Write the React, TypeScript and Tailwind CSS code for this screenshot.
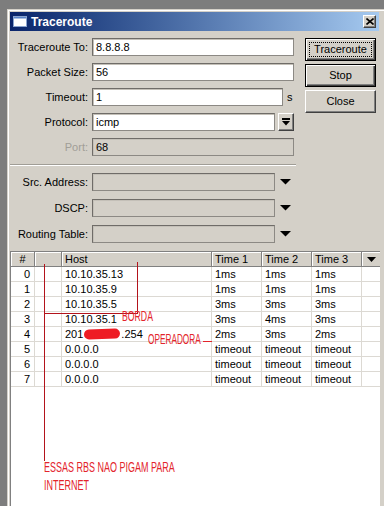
import React from "react";

const rows = [
  { n: "0", host: "10.10.35.13", t: ["1ms", "1ms", "1ms"] },
  { n: "1", host: "10.10.35.9", t: ["1ms", "1ms", "1ms"] },
  { n: "2", host: "10.10.35.5", t: ["3ms", "3ms", "3ms"] },
  { n: "3", host: "10.10.35.1", t: ["3ms", "4ms", "3ms"] },
  { n: "4", host: "hidden", t: ["2ms", "3ms", "2ms"] },
  { n: "5", host: "0.0.0.0", t: ["timeout", "timeout", "timeout"] },
  { n: "6", host: "0.0.0.0", t: ["timeout", "timeout", "timeout"] },
  { n: "7", host: "0.0.0.0", t: ["timeout", "timeout", "timeout"] },
];

const field =
  "h-[18px] border border-[#8c8984] border-t-[#6f6c68] border-l-[#6f6c68] shadow-[inset_1px_1px_0_#c4c0b8]";

const FormRow = ({
  label,
  muted = false,
  children,
}: {
  label: string;
  muted?: boolean;
  children: React.ReactNode;
}) => (
  <div className="flex h-[18px] items-center">
    <span
      className={`w-[78px] shrink-0 whitespace-nowrap text-right ${muted ? "text-[#a19e97]" : ""}`}
    >
      {label}
    </span>
    <div className="ml-[4px] flex flex-1 items-center">{children}</div>
  </div>
);

const DownArrow = () => (
  <svg width="11" height="6" viewBox="0 0 11 6" className="ml-[5px]">
    <polygon points="0,0 11,0 5.5,5.5" fill="#000" />
  </svg>
);

const Note = ({
  className,
  children,
}: {
  className: string;
  children: React.ReactNode;
}) => (
  <div
    className={`pointer-events-none absolute origin-top-left whitespace-nowrap font-['Liberation_Sans',sans-serif] text-[15px] leading-none text-[#e3242b] ${className}`}
  >
    {children}
  </div>
);

export default function App() {
  return (
    <div className="relative h-[506px] w-[384px] overflow-hidden bg-[#7d7d7d] pl-[7px] pt-[9px] font-['Liberation_Sans',Arial,sans-serif] text-[11px] leading-none text-black">
      <div className="flex h-[500px] w-[378px] flex-col border-l border-t border-[#d4d0c8] bg-[#d4d0c8] pl-[2px] pr-[5px] pt-[2px] shadow-[inset_1px_1px_0_#ffffff]">
        {/* title bar */}
        <div className="mr-[1px] flex h-[19px] shrink-0 items-center bg-gradient-to-r from-[#0a246a] to-[#a6caf0] pl-[3px] pr-[3px]">
          <svg width="14" height="11" viewBox="0 0 14 11">
            <rect x="0.5" y="0.5" width="13" height="10" fill="#fff" stroke="#8aa4d0" />
            <rect x="1" y="1" width="12" height="1.5" fill="#5b84c8" />
          </svg>
          <span className="ml-[4px] text-[12px] font-bold text-white">Traceroute</span>
          <div className="ml-auto flex h-[13px] w-[13px] items-center justify-center border border-b-[#404040] border-l-white border-r-[#404040] border-t-white bg-[#d4d0c8] shadow-[inset_-1px_-1px_0_#808080]">
            <svg width="8" height="7" viewBox="0 0 8 7">
              <path d="M0.5 0.5 L7.5 6.5 M7.5 0.5 L0.5 6.5" stroke="#000" strokeWidth="1.6" />
            </svg>
          </div>
        </div>

        {/* form + buttons */}
        <div className="mt-[7px] flex shrink-0">
          <div className="flex w-[286px] flex-col">
            <div className="flex flex-col gap-[7px] pr-[2px]">
              <FormRow label="Traceroute To:">
                <div className={`${field} flex flex-1 items-center bg-white pl-[3px]`}>8.8.8.8</div>
              </FormRow>
              <FormRow label="Packet Size:">
                <div className={`${field} flex flex-1 items-center bg-white pl-[3px]`}>56</div>
              </FormRow>
              <FormRow label="Timeout:">
                <div className={`${field} flex w-[191px] items-center bg-white pl-[3px]`}>1</div>
                <span className="ml-[4px]">s</span>
              </FormRow>
              <FormRow label="Protocol:">
                <div className={`${field} flex w-[183px] items-center bg-white pl-[3px]`}>icmp</div>
                <div className="ml-[3px] flex h-[18px] w-[16px] items-center justify-center border border-b-[#404040] border-l-white border-r-[#404040] border-t-white bg-[#d4d0c8] shadow-[inset_-1px_-1px_0_#808080]">
                  <svg width="8" height="8" viewBox="0 0 8 8">
                    <rect x="0" y="0" width="8" height="2" fill="#000" />
                    <polygon points="0,3 8,3 4,7.5" fill="#000" />
                  </svg>
                </div>
              </FormRow>
              <FormRow label="Port:" muted>
                <div className={`${field} flex flex-1 items-center bg-[#d4d0c8] pl-[3px]`}>68</div>
              </FormRow>
            </div>

            <div className="mb-[7px] mt-[8px] h-[2px] border-b border-t border-b-white border-t-[#a09d96]" />

            <div className="flex flex-col gap-[8px]">
              <FormRow label="Src. Address:">
                <div className={`${field} w-[183px] bg-[#d4d0c8]`} />
                <DownArrow />
              </FormRow>
              <FormRow label="DSCP:">
                <div className={`${field} w-[183px] bg-[#d4d0c8]`} />
                <DownArrow />
              </FormRow>
              <FormRow label="Routing Table:">
                <div className={`${field} w-[183px] bg-[#d4d0c8]`} />
                <DownArrow />
              </FormRow>
            </div>
          </div>

          <div className="ml-[9px] flex w-[71px] flex-col gap-[3px]">
            <div className="flex h-[23px] items-center justify-center border border-black bg-[#d4d0c8] p-[3px] shadow-[inset_1px_1px_0_#fff,inset_-1px_-1px_0_#404040,inset_-2px_-2px_0_#808080]">
              <div className="flex h-full w-full items-center justify-center border border-dotted border-black">
                Traceroute
              </div>
            </div>
            <div className="flex h-[23px] items-center justify-center border border-black bg-[#d4d0c8] shadow-[inset_1px_1px_0_#fff,inset_-1px_-1px_0_#404040,inset_-2px_-2px_0_#808080]">
              Stop
            </div>
            <div className="flex h-[23px] items-center justify-center border border-b-[#404040] border-l-white border-r-[#404040] border-t-white bg-[#d4d0c8] shadow-[inset_-1px_-1px_0_#808080]">
              Close
            </div>
          </div>
        </div>

        {/* results table */}
        <div className="mt-[8px] flex flex-1 flex-col border-l border-t border-[#808080] bg-white">
          <div className="flex h-[15px] shrink-0">
            {[
              { w: "w-[24px] justify-center", t: "#" },
              { w: "w-[27px]", t: "" },
              { w: "w-[150px] pl-[3px]", t: "Host" },
              { w: "w-[50px] pl-[3px]", t: "Time 1" },
              { w: "w-[50px] pl-[3px]", t: "Time 2" },
              { w: "w-[50px] pl-[3px]", t: "Time 3" },
            ].map((c, i) => (
              <div
                key={i}
                className={`flex items-center border-b border-r border-[#808080] bg-[#d4d0c8] shadow-[inset_1px_1px_0_#fff] ${c.w}`}
              >
                {c.t}
              </div>
            ))}
            <div className="flex flex-1 items-center justify-center border-b border-[#808080] bg-[#d4d0c8] shadow-[inset_1px_1px_0_#fff]">
              <svg width="9" height="5" viewBox="0 0 9 5">
                <polygon points="0,0 9,0 4.5,5" fill="#000" />
              </svg>
            </div>
          </div>

          {rows.map((r) => (
            <div key={r.n} className="flex h-[15px] shrink-0">
              <div className="flex w-[24px] items-center justify-end border-b border-r border-[#dcd9d3] pr-[4px]">
                {r.n}
              </div>
              <div className="w-[27px] border-b border-r border-[#dcd9d3]" />
              <div className="flex w-[150px] items-center border-b border-r border-[#dcd9d3] pl-[3px]">
                {r.host === "hidden" ? (
                  <>
                    201
                    <span className="mx-[1px] inline-block h-[10px] w-[36px] -rotate-2 rounded-full bg-[#ee1c24]" />
                    .254
                  </>
                ) : (
                  r.host
                )}
              </div>
              {r.t.map((v, i) => (
                <div
                  key={i}
                  className="flex w-[50px] items-center border-b border-r border-[#dcd9d3] pl-[3px]"
                >
                  {v}
                </div>
              ))}
              <div className="flex-1 border-b border-[#dcd9d3]" />
            </div>
          ))}
        </div>
      </div>

      {/* hand drawn annotations */}
      <div className="pointer-events-none absolute left-[44px] top-[264px] h-[197px] w-[1px] bg-[#b3131b]" />
      <div className="pointer-events-none absolute left-[44px] top-[313px] h-[1px] w-[94px] bg-[#b3131b]" />
      <div className="pointer-events-none absolute left-[137px] top-[262px] h-[51px] w-[1px] bg-[#b3131b]" />
      <div className="pointer-events-none absolute left-[203px] top-[341px] h-[1px] w-[9px] bg-[#e3242b]" />
      <Note className="left-[122px] top-[308px] scale-x-[0.58]">BORDA</Note>
      <Note className="left-[148px] top-[331px] scale-x-[0.55]">OPERADORA</Note>
      <Note className="left-[44px] top-[459px] scale-x-[0.6]">ESSAS RBS NAO PIGAM PARA</Note>
      <Note className="left-[44px] top-[477px] scale-x-[0.6]">INTERNET</Note>
    </div>
  );
}
